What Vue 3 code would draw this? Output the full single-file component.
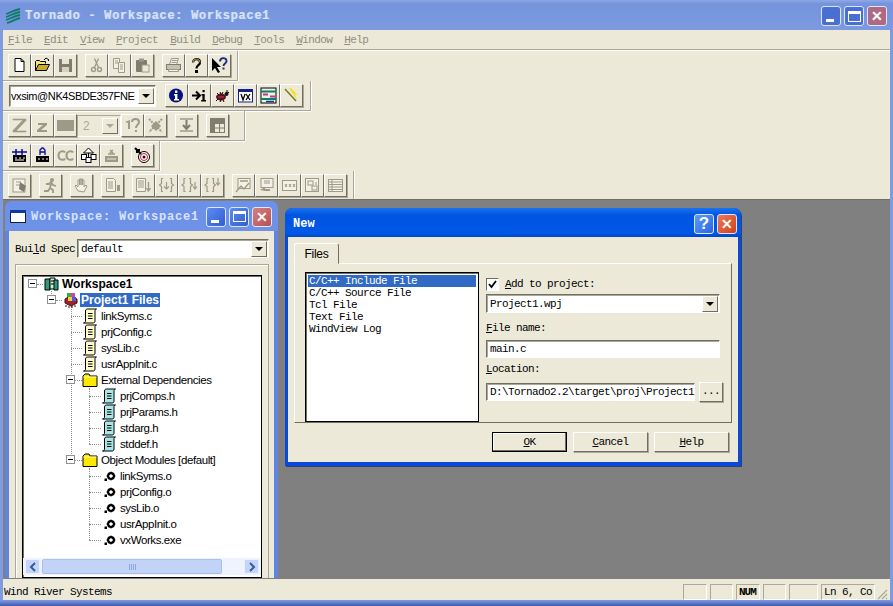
<script setup>
const menus = ['File', 'Edit', 'View', 'Project', 'Build', 'Debug', 'Tools', 'Window', 'Help']

const g = '#9d9a8a'
const d = '#7f7d70'
const icons = {
  new: '<path d="M4 1.5h6l3 3v10H4z" fill="#fff" stroke="#000"/><path d="M10 1.5v3h3" fill="none" stroke="#000"/>',
  open: '<path d="M1.5 13.5v-9l1-1h3l1 1h5v2" fill="#f5e27a" stroke="#000"/><path d="M1.5 13.5l3-6h11l-3 6z" fill="#c9a92e" stroke="#000"/><path d="M10 3l2-2 3 2-1 1" fill="none" stroke="#000"/>',
  save: `<rect x="2" y="2" width="13" height="13" fill="${d}"/><rect x="5" y="2" width="7" height="5" fill="#e8e5d4"/><rect x="5" y="10" width="7" height="5" fill="#d6d3c2"/>`,
  cut: `<circle cx="5.5" cy="12.5" r="2" fill="none" stroke="${g}" stroke-width="1.4"/><circle cx="11.5" cy="12.5" r="2" fill="none" stroke="${g}" stroke-width="1.4"/><path d="M6.5 10.5L10.5 1.5M10.5 10.5L6.5 1.5" stroke="${g}" stroke-width="1.3"/>`,
  copy: `<path d="M2.5 1.5h6v10h-6z" fill="#f3f1e6" stroke="${g}"/><path d="M7.5 5.5h6v10h-6z" fill="#f3f1e6" stroke="${g}"/><path d="M4 4h3M4 6h3M9 8h3M9 10h3M9 12h3" stroke="${g}"/>`,
  paste: `<rect x="2" y="3" width="11" height="12" rx="1" fill="${d}"/><rect x="5" y="1.5" width="5" height="3" fill="${g}"/><rect x="8" y="8" width="7" height="7" fill="#ece9d8" stroke="${g}"/>`,
  print: `<path d="M4.500 7.500l2-6h7l-2 6z" fill="#f3f1e6" stroke="${g}"/><rect x="1.500" y="7.500" width="14" height="5" fill="#c5c2b2" stroke="${d}"/><path d="M3.500 12.500h10v2h-10z" fill="#f3f1e6" stroke="${g}"/><path d="M7 3.500h5M6.500 5.500h5" stroke="${g}"/>`,
  help: '<path d="M5 5.500C5 1 12 1 12 5.500c0 3-3.500 2.500-3.500 6" fill="none" stroke="#000" stroke-width="2.200"/><path d="M5 5.500C5 1 12 1 12 5.500" fill="none" stroke="#f2e05c" stroke-width=".8"/><rect x="7" y="13" width="3" height="3" fill="#000"/>',
  ctx: '<path d="M1 1v13l3-3 3 5 2-1-3-5h4z" fill="#000"/><path d="M9 4.500C9 0 15.500 0 15.500 4.200c0 2.400-3 2.300-3 4.800" fill="none" stroke="#1b2f78" stroke-width="1.900"/><rect x="11.500" y="10.500" width="2" height="2" fill="#1b2f78"/>',
  info: '<circle cx="8" cy="8.500" r="7" fill="#04127e"/><rect x="7" y="3.500" width="2.400" height="2.400" fill="#fff"/><path d="M6 7h3.400v5H11v1.500H6V12h1V8.500H6z" fill="#fff"/>',
  goi: '<path d="M1 8.500h7M5 4.500l4 4-4 4" fill="none" stroke="#000" stroke-width="2"/><rect x="11.500" y="3" width="2.200" height="2.200" fill="#000"/><path d="M10.500 7h3.200v6H15v1.500h-4.800V13h1.200V8.500h-.9z" fill="#000"/>',
  bug: '<ellipse cx="7" cy="10" rx="5" ry="3.500" fill="#5b1020"/><circle cx="12.500" cy="7" r="2" fill="#111"/><path d="M3 6l2 2M6 5l1 2M9 5l-1 2M2 14l2-2M6 15l1-2M10 15l-1-2M13 3l0 3M15 5l-2 2" stroke="#000"/><path d="M4 10h6" stroke="#c04060"/>',
  vx: '<rect x="1.500" y="2.500" width="14" height="12.500" fill="#fff" stroke="#10208a"/><rect x="1" y="2" width="15" height="3" fill="#10208a"/><path d="M4 7l2 6 2-6M9 7l4 6M13 7l-4 6" fill="none" stroke="#000" stroke-width="1.300"/>',
  chart: '<rect x="1" y="1" width="15" height="15" fill="#e8f4e0" stroke="#000"/><path d="M1 4.500h15M1 12h15" stroke="#0a7f6a" stroke-width="2"/><path d="M3 7.500h5M10 9.500h5" stroke="#d03090" stroke-width="2"/><path d="M6 14.500h8" stroke="#2030a0" stroke-width="1.500"/>',
  wand: '<path d="M2 2l11 12" stroke="#7a7a20" stroke-width="1.500"/><path d="M6 1l8 12-2-6 3 1L8 1z" fill="#f5e21e"/>',
  bigz: `<path d="M2 2h13v1.500L5 14h10v1H2v-1.500L12 3H2z" fill="${g}" stroke="${g}" stroke-width=".6"/>`,
  smz: `<path d="M4 6h9v2l-6 5h6v2H3v-2l6-5H4z" fill="${g}"/>`,
  block: '<rect x="-1" y="3" width="19" height="11" fill="#9d9a8a"/>',
  qmark: `<path d="M1 5l5-2v9H4V6z" fill="${g}"/><path d="M8 5c0-4 7-4 7 0 0 3-3 2.500-3 6" fill="none" stroke="${g}" stroke-width="2"/><rect x="11" y="13" width="2" height="2" fill="${g}"/>`,
  cross: `<path d="M2 2l13 13M15 2L2 15" stroke="${g}" stroke-width="2" stroke-dasharray="2 1"/><path d="M4 9l5-5 5 5-5 5z" fill="${g}"/>`,
  down: `<path d="M2 2h13M2 14h13" stroke="${g}" stroke-width="1.600"/><path d="M8.500 3v8M5 8l3.500 4L12 8" fill="none" stroke="${d}" stroke-width="2"/>`,
  grid: `<rect x="1" y="1" width="15" height="15" fill="${d}"/><path d="M6 7h9v8H6z" fill="#ece9d8"/><path d="M6 11h9M10.500 7v8" stroke="${d}"/>`,
  b1: '<rect x="2" y="8" width="13" height="7" fill="#000"/><path d="M4 11h2M8 11h2M12 11h2M4 13h9" stroke="#fff"/><path d="M1 5h15M5 2v7M11 2v7" stroke="#0a0aa0" stroke-width="1.500"/>',
  b2: '<rect x="2" y="9" width="13" height="6" fill="#000"/><path d="M4 12h2M8 12h2M12 12h2" stroke="#fff"/><path d="M6 8V3l2-2h1l2 2v5M6 5h5" fill="none" stroke="#0a0aa0" stroke-width="1.300"/>',
  cc: `<path d="M8 5.500C7 3.500 1.500 3.500 1.500 8.500S7 13.500 8 11.500M16 5.500C15 3.500 9.500 3.500 9.500 8.500S15 13.500 16 11.500" fill="none" stroke="${g}" stroke-width="2"/>`,
  house: '<path d="M8.500 1l5 5h-10z" fill="#fff" stroke="#000"/><rect x="1.500" y="7.500" width="5" height="5" fill="#fff" stroke="#000"/><rect x="11" y="7.500" width="5" height="5" fill="#fff" stroke="#000"/><rect x="6" y="10.500" width="5" height="5" fill="#fff" stroke="#000"/><path d="M8.500 6v4" stroke="#000"/>',
  gbuild: `<rect x="2" y="9" width="13" height="6" fill="${g}"/><path d="M5 7h7M7 3l3 3M10 3L7 6" stroke="${g}" stroke-width="1.500"/><path d="M4 12h9" stroke="#ece9d8"/>`,
  target: '<circle cx="10" cy="10" r="5.500" fill="#fff" stroke="#000"/><circle cx="10" cy="10" r="3.500" fill="none" stroke="#c02040"/><circle cx="10" cy="10" r="1.500" fill="#400"/><path d="M1 1l6 6M3 6V3h3" fill="none" stroke="#000" stroke-width="2"/>',
  g1: `<rect x="2" y="2" width="12" height="13" fill="#f3f1e6" stroke="${g}"/><path d="M5 5h5M5 8h4" stroke="${g}"/><path d="M9 5l6 4-2 6-5-3z" fill="${d}"/>`,
  run: `<circle cx="10" cy="3" r="2" fill="${g}"/><path d="M4 7h3l2-2 2 3 3 1M9 7l-1 4 3 2v3M8 11l-2 3H2" fill="none" stroke="${g}" stroke-width="1.800"/>`,
  hand: `<path d="M5 14L2 9l1-1 2 2V3h1.500v5V2H8v6V2h1.500v6V3H11v7l2-2 1 1-3 6z" fill="#f3f1e6" stroke="${g}"/>`,
  list: `<path d="M2.500 1.500h7l2 2v11h-9z" fill="#f3f1e6" stroke="${g}"/><path d="M4 5h5M4 7h5M4 9h5M4 11h5" stroke="${g}"/><rect x="13" y="8" width="3" height="6" fill="${g}"/>`,
  listd: `<path d="M1.500 1.500h9v13h-9z" fill="#f3f1e6" stroke="${g}"/><path d="M3 4h6M3 6h6M3 8h6M3 10h6" stroke="${g}"/><path d="M13.500 5v9M11.500 11l2 3 2-3" fill="none" stroke="${g}" stroke-width="1.300"/>`,
  br1: `<path d="M5 1.500H3.500v5L1.500 8l2 1.500v5H5M12 1.500h1.500v5l2 1.500-2 1.500v5H12" fill="none" stroke="${g}" stroke-width="1.200"/><path d="M8.500 5v7M6 9.500l2.500 2.500L11 9.500" fill="none" stroke="${g}" stroke-width="1.200"/>`,
  br2: `<path d="M4.500 1.500H3v5L1 8l2 1.500v5h1.500M8 1.500h1.500v5l2 1.500-2 1.500v5H8" fill="none" stroke="${g}" stroke-width="1.200"/><path d="M14 5v7M12 9.500l2 2.500 2-2.500" fill="none" stroke="${g}" stroke-width="1.200"/>`,
  br3: `<path d="M4.500 1.500H3v5L1 8l2 1.500v5h1.500M8 1.500h1.500v5l2 1.500-2 1.500v5H8" fill="none" stroke="${g}" stroke-width="1.200"/><path d="M14 1v7M12 5.500L14 8l2-2.500" fill="none" stroke="${g}" stroke-width="1.200"/>`,
  w1: `<rect x="3" y="1.500" width="12" height="10" fill="#f3f1e6" stroke="${g}"/><path d="M5 4h8M1 15l5-6 3 3 5-6" fill="none" stroke="${g}" stroke-width="1.300"/>`,
  w2: `<rect x="3" y="1.500" width="12" height="9" fill="#f3f1e6" stroke="${g}"/><path d="M6 4h6M6 6h6" stroke="${g}"/><path d="M2 13l5-3v2h5v2H7" fill="${g}"/>`,
  w3: `<rect x="1.500" y="3.500" width="14" height="10" fill="#f3f1e6" stroke="${g}"/><path d="M4 7l2 3M6 7l-2 3M8 7l2 3M10 7l-2 3M12 7l2 3M14 7l-2 3" stroke="${g}"/>`,
  w4: `<rect x="1.500" y="1.500" width="13" height="13" fill="#f3f1e6" stroke="${g}"/><rect x="4" y="4" width="5" height="4" fill="none" stroke="${g}"/><rect x="8" y="9" width="5" height="4" fill="none" stroke="${g}"/><path d="M12 5v3" stroke="${g}"/>`,
  w5: `<rect x="1.500" y="2.500" width="14" height="12" fill="#f3f1e6" stroke="${g}"/><path d="M2 5h13M2 7.500h13M2 10h13M2 12.500h13M5 3v11" stroke="${g}"/>`
}

const bars = [
  { cls: 'bar1', groups: [['new', 'open', 'save'], ['cut', 'copy', 'paste'], ['print', 'help', 'ctx']] },
  { cls: 'bar2', combo: 'vxsim@NK4SBDE357FNE', groups: [['info', 'goi', 'bug', 'vx', 'chart', 'wand']] },
  { cls: 'bar3', groups: [['bigz', 'smz', 'block', '#2', 'qmark', 'cross'], ['down'], ['grid']] },
  { cls: 'bar4', groups: [['b1', 'b2', 'cc', 'house', 'gbuild'], ['target']] },
  { cls: 'bar5', groups: [['g1'], ['run'], ['hand'], ['list'], ['listd', 'br1', 'br2', 'br3'], ['w1', 'w2', 'w3', 'w4', 'w5']] }
]

const tree = [
  { label: 'Workspace1', level: 0, icon: 'ws', box: true, bold: true },
  { label: 'Project1 Files', level: 1, icon: 'proj', box: true, bold: true, sel: true },
  { label: 'linkSyms.c', level: 2, icon: 'c' },
  { label: 'prjConfig.c', level: 2, icon: 'c' },
  { label: 'sysLib.c', level: 2, icon: 'c' },
  { label: 'usrAppInit.c', level: 2, icon: 'c' },
  { label: 'External Dependencies', level: 2, icon: 'folder', box: true },
  { label: 'prjComps.h', level: 3, icon: 'h' },
  { label: 'prjParams.h', level: 3, icon: 'h' },
  { label: 'stdarg.h', level: 3, icon: 'h' },
  { label: 'stddef.h', level: 3, icon: 'h' },
  { label: 'Object Modules [default]', level: 2, icon: 'folder', box: true },
  { label: 'linkSyms.o', level: 3, icon: 'o' },
  { label: 'prjConfig.o', level: 3, icon: 'o' },
  { label: 'sysLib.o', level: 3, icon: 'o' },
  { label: 'usrAppInit.o', level: 3, icon: 'o' },
  { label: 'vxWorks.exe', level: 3, icon: 'o' }
]
const docPath = 'M3.500 3c0-1.500 1-2 2-2h9c-1 0-1.500 1-1.500 2v10c0 1.500-1 2-2 2H1.500c1.500 0 2-1 2-2z'
const treeIcons = {
  ws: '<path d="M1 3h5v11H1z" fill="#2f9a78" stroke="#000"/><path d="M6 2h5v11H6z" fill="#bff0d8" stroke="#000"/><path d="M10 4h4v10h-4z" fill="#2f9a78" stroke="#000"/><path d="M7 5h3M7 8h3" stroke="#000"/>',
  proj: '<path d="M2 7l5-3 7 3v4l-6 3-6-3z" fill="#a02030" stroke="#401010"/><rect x="4" y="1" width="4" height="4" fill="#30b040"/><rect x="8" y="1" width="4" height="4" fill="#d040c0"/><rect x="5" y="5" width="4" height="4" fill="#f0d030"/><rect x="9" y="5" width="4" height="4" fill="#4060e0"/><path d="M3 13v2M6 14v2M9 14v2M12 13v2" stroke="#401010"/>',
  c: `<path d="${docPath}" fill="#fffbc4" stroke="#000"/><path d="M6 5.500h4.500M6 8h4.500M6 10.500h4.500" stroke="#000" stroke-width="1.200"/>`,
  h: `<path d="${docPath}" fill="#a5e8e8" stroke="#000"/><path d="M6 5.500h4.500M6 8h4.500M6 10.500h4.500" stroke="#000" stroke-width="1.200"/>`,
  folder: '<path d="M1 14.500V4l2-2h4l1 2h7v10.500z" fill="#ffe800" stroke="#000" stroke-width="1"/><path d="M1.500 5h13" stroke="#fff8a0"/>',
  o: '<circle cx="10" cy="8" r="3" fill="none" stroke="#000" stroke-width="2"/><path d="M10 3.500v9M5.500 8h9M7 5l6 6M13 5l-6 6" stroke="#000" stroke-width="1"/><circle cx="10" cy="8" r="1.600" fill="#fff"/><rect x="3.500" y="10.500" width="2.500" height="2.500" fill="#000"/>'
}
</script>

<template>
  <div class="app">
    <header class="titlebar">
      <svg class="logo" viewBox="0 0 16 16" width="16" height="16">
        <path d="M1 6c4-1 8-4 14-5M1 9c4-1 8-4 14-5M1 12c4-1 8-4 14-5M2 15c4-1 8-4 13-5" fill="none" stroke="#0e7a6c" stroke-width="1.800" />
      </svg>
      <span class="title-text">Tornado - Workspace: Workspace1</span>
      <div class="win-btns">
        <span class="wb wb-blue"><i class="min"></i></span>
        <span class="wb wb-blue"><i class="max"></i></span>
        <span class="wb wb-mute">✕</span>
      </div>
    </header>

    <div class="body">
      <nav class="menubar">
        <span v-for="m in menus" :key="m" class="menu"><u>{{ m[0] }}</u>{{ m.slice(1) }}</span>
      </nav>

      <div v-for="bar in bars" :key="bar.cls" class="toolbar" :class="bar.cls">
        <div v-if="bar.combo" class="combo tb-combo">
          <span class="combo-value">{{ bar.combo }}</span>
          <span class="arrow"><b></b></span>
        </div>
        <div v-for="(grp, i) in bar.groups" :key="i" class="tb-group">
          <template v-for="ic in grp" :key="ic">
            <div v-if="ic === '#2'" class="mini-combo">
              <span>2</span>
              <span class="arrow off"><b></b></span>
            </div>
            <span v-else class="tbtn">
              <svg viewBox="0 0 17 17" width="17" height="17" v-html="icons[ic]"></svg>
            </span>
          </template>
        </div>
      </div>

      <main class="client">
        <section class="ws">
          <div class="ws-title">
            <svg width="16" height="13" viewBox="0 0 16 13"><rect x=".5" y=".5" width="15" height="12" fill="#fff" stroke="#123" /><rect x="0" y="0" width="16" height="3" fill="#123a9a" /></svg>
            <span class="ws-title-text">Workspace: Workspace1</span>
            <div class="win-btns small">
              <span class="wb wb-bright"><i class="min"></i></span>
              <span class="wb wb-bright"><i class="max"></i></span>
              <span class="wb wb-red">✕</span>
            </div>
          </div>
          <div class="ws-body">
            <div class="spec">
              <span class="mono spec-label">Bui<u>l</u>d Spec</span>
              <div class="combo spec-combo">
                <span class="combo-value mono">default</span>
                <span class="arrow"><b></b></span>
              </div>
            </div>
            <div class="group">
              <div class="treebox">
                <div class="tree">
                  <div class="vline l1"></div>
                  <div class="vline l2"></div>
                  <div class="vline l3"></div>
                  <div class="vline l4"></div>
                  <div v-for="n in tree" :key="n.label" class="node" :class="'lv' + n.level">
                    <span class="conn"></span>
                    <span v-if="n.box" class="expander"></span>
                    <svg class="ticon" viewBox="0 0 16 16" width="16" height="16" v-html="treeIcons[n.icon]"></svg>
                    <span class="nlabel" :class="{ bold: n.bold, sel: n.sel }">{{ n.label }}</span>
                  </div>
                </div>
                <div class="hscroll">
                  <span class="sb-btn">
                    <svg width="8" height="10" viewBox="0 0 8 10"><path d="M6 1L2 5l4 4" fill="none" stroke="#3a5a9a" stroke-width="2" /></svg>
                  </span>
                  <span class="sb-thumb"><i></i></span>
                  <span class="sb-btn">
                    <svg width="8" height="10" viewBox="0 0 8 10"><path d="M2 1l4 4-4 4" fill="none" stroke="#3a5a9a" stroke-width="2" /></svg>
                  </span>
                </div>
              </div>
            </div>
          </div>
        </section>

        <section class="dialog">
          <div class="dlg-title">
            <span class="dlg-title-text">New</span>
            <div class="win-btns dlg">
              <span class="wb wb-help">?</span>
              <span class="wb wb-close">✕</span>
            </div>
          </div>
          <div class="dlg-body">
            <div class="tabs"><span class="tab">Files</span></div>
            <div class="panel">
              <ul class="filelist mono">
                <li class="picked">C/C++ Include File</li>
                <li>C/C++ Source File</li>
                <li>Tcl File</li>
                <li>Text File</li>
                <li>WindView Log</li>
              </ul>
              <div class="form mono">
                <label class="check">
                  <span class="checkbox">
                    <svg width="9" height="9" viewBox="0 0 9 9"><path d="M1 4l2.500 3L8 1" fill="none" stroke="#000" stroke-width="1.800" /></svg>
                  </span>
                  <span><u>A</u>dd to project:</span>
                </label>
                <div class="combo dlg-combo">
                  <span class="combo-value">Project1.wpj</span>
                  <span class="arrow"><b></b></span>
                </div>
                <div class="flabel"><u>F</u>ile name:</div>
                <div class="input">main.c</div>
                <div class="flabel second"><u>L</u>ocation:</div>
                <div class="loc">
                  <div class="input grow">D:\Tornado2.2\target\proj\Project1</div>
                  <span class="btn dots">...</span>
                </div>
              </div>
            </div>
            <div class="actions mono">
              <span class="btn push default"><u>O</u>K</span>
              <span class="btn push"><u>C</u>ancel</span>
              <span class="btn push"><u>H</u>elp</span>
            </div>
          </div>
        </section>
      </main>

      <footer class="status mono">
        <span class="status-msg">Wind River Systems</span>
        <span class="cell w25"></span>
        <span class="cell w23"></span>
        <span class="cell w25 on">NUM</span>
        <span class="cell w23"></span>
        <span class="cell w30"></span>
        <span class="cell w54">Ln 6, Co</span>
        <svg class="grip" width="13" height="13" viewBox="0 0 13 13"><path d="M12 3l-9 9M12 7l-5 5M12 11l-1 1" stroke="#aca899" stroke-width="1.200" /></svg>
      </footer>
    </div>
  </div>
</template>

<style>
html, body { margin: 0; padding: 0; overflow: hidden; }
</style>

<style scoped>
.app {
  width: 893px; height: 606px; overflow: hidden; display: flex; flex-direction: column;
  background: linear-gradient(#7e9be0 0, #7e9be0 600px, #6a86d4 602px, #3f58ac 606px);
  font-family: "Liberation Sans", Arial, sans-serif; color: #000;
}
.mono, .menu, .title-text, .ws-title-text, .dlg-title-text {
  font-family: "Liberation Mono", "DejaVu Sans Mono", monospace;
}
.mono, .menu { font-size: 11px; letter-spacing: -0.6px; }

.titlebar {
  height: 30px; flex: none; display: flex; align-items: center; padding: 2px 6px 0 5px; box-sizing: border-box;
  background: linear-gradient(#8ea8e8 0, #7694dc 12%, #7a98df 70%, #7d9ae0 100%);
}
.logo { margin-right: 4px; }
.title-text { color: #d8e4fa; font-weight: 700; font-size: 12px; letter-spacing: .7px; white-space: pre; text-shadow: 1px 0 0 rgba(216, 228, 250, .35); }
.win-btns { margin-left: auto; display: flex; gap: 3px; }
.wb {
  width: 20px; height: 20px; box-sizing: border-box; border: 1px solid #dde6fa; border-radius: 3px;
  display: flex; align-items: center; justify-content: center; color: #fff; font-size: 14px; font-weight: 700; position: relative;
}
.wb-blue { background: #4a6fd4; }
.wb-mute { background: #ad6a82; }
.wb-bright { background: linear-gradient(135deg, #5e8cf0, #2f5fd0); }
.wb-red { background: linear-gradient(135deg, #d48080, #b85050); }
.wb-help { background: linear-gradient(135deg, #5c9cf8, #2a66e0); font-size: 17px; }
.wb-close { background: linear-gradient(135deg, #ec7a58, #d0401c); }
.min { position: absolute; left: 4px; bottom: 3px; width: 8px; height: 3px; background: #fff; }
.max { width: 11px; height: 7px; border: 1px solid #fff; border-top-width: 3px; box-sizing: content-box; }

.body { flex: 1; min-height: 0; margin: 0 3px 6px; background: #ece9d8; display: flex; flex-direction: column; }

.menubar { height: 20px; flex: none; display: flex; align-items: center; padding: 1px 0 0 5px; box-sizing: border-box; border-bottom: 1px solid #aca899; box-shadow: 0 1px 0 #fff; color: #8f8d80; }
.menu { padding-right: 12px; }

.toolbar { display: flex; align-items: center; box-sizing: border-box; padding-left: 5px; gap: 8px; border-right: 1px solid #aca899; border-bottom: 1px solid #aca899; box-shadow: 1px 0 0 #fff, 0 1px 0 #fff; }
.bar1 { width: 235px; height: 30px; margin-top: 1px; }
.bar2 { width: 308px; height: 30px; }
.bar3 { width: 242px; height: 30px; }
.bar4 { width: 157px; height: 30px; }
.bar5 { width: 351px; height: 28px; border-bottom: 0; box-shadow: 1px 0 0 #fff; padding-top: 1px; }
.tb-group { display: flex; align-items: center; }
.tbtn {
  width: 23px; height: 23px; box-sizing: border-box; display: flex; align-items: center; justify-content: center;
  background: #ece9d8; border: 1px solid; border-color: #fff #716f64 #716f64 #fff; box-shadow: 1px 1px 0 #aca899;
}
.mini-combo { width: 44px; height: 22px; box-sizing: border-box; background: #ece9d8; display: flex; align-items: center; justify-content: space-between; padding: 0 2px 0 5px; border: 1px solid; border-color: #aca899 #fff #fff #aca899; color: #aca899; font-size: 12px; }

.combo { background: #fff; box-sizing: border-box; display: flex; align-items: center; justify-content: space-between; border: 1px solid; border-color: #716f64 #fff #fff #716f64; box-shadow: inset 1px 1px 0 #aca899; padding: 0 1px 0 3px; }
.combo-value { white-space: pre; }
.tb-combo { width: 147px; height: 22px; margin-left: 1px; margin-right: 1px; font-size: 11px; letter-spacing: -0.4px; padding-left: 1px; flex: none; }
.arrow { width: 16px; height: 16px; background: #ece9d8; border: 1px solid; border-color: #fff #716f64 #716f64 #fff; box-sizing: border-box; display: flex; align-items: center; justify-content: center; flex: none; }
.arrow b { width: 0; height: 0; border: 4px solid transparent; border-top-color: #000; border-bottom: 0; }
.arrow.off b { border-top-color: #aca899; }

.client { flex: 1; min-height: 0; background: #808080; position: relative; border-top: 1px solid #716f64; }

.ws { position: absolute; left: 2px; top: 1px; width: 273px; bottom: 1px; background: #5f83e0; border-radius: 7px 7px 0 0; display: flex; flex-direction: column; box-sizing: border-box; padding: 0 4px; }
.ws-title { height: 30px; flex: none; display: flex; align-items: center; gap: 5px; background: linear-gradient(#6a90ea, #6f92e6); margin: 0 -4px; padding: 1px 6px 0 5px; box-sizing: border-box; border-radius: 7px 7px 0 0; }
.ws-title-text { color: #d6e2fa; font-weight: 700; font-size: 12px; letter-spacing: .8px; white-space: pre; }
.win-btns.small { margin-left: auto; }
.ws-body { flex: 1; min-height: 0; background: #ece9d8; display: flex; flex-direction: column; padding: 8px 5px 0 6px; }
.spec { display: flex; align-items: center; height: 19px; flex: none; }
.spec-label { width: 62px; flex: none; white-space: pre; }
.spec-combo { flex: 1; height: 19px; }
.group { flex: 1; min-height: 0; margin-top: 6px; padding: 10px 6px 0 6px; border: 1px solid #aca899; border-bottom: 0; box-shadow: inset 1px 1px 0 #fff; display: flex; }
.treebox { flex: 1; min-width: 0; background: #fff; border: 1px solid #000; box-shadow: inset 1px 1px 0 #716f64; display: flex; flex-direction: column; box-sizing: border-box; }
.tree { flex: 1; min-height: 0; position: relative; }
.node { height: 16px; display: flex; align-items: center; position: relative; font-size: 11.500px; letter-spacing: -0.4px; white-space: pre; }
.lv0 { padding-left: 29px; }
.lv1 { padding-left: 53px; }
.lv2 { padding-left: 59px; }
.lv3 { padding-left: 78px; }
.ticon { flex: none; margin-right: 3px; }
.expander { position: absolute; width: 9px; height: 9px; box-sizing: border-box; border: 1px solid #8e8f8f; background: linear-gradient(#000, #000) center / 5px 1px no-repeat #fff; top: 3px; }
.lv0 .expander { left: 5px; }
.lv1 .expander { left: 24px; }
.lv2 .expander { left: 43px; }
.lv0 .ticon { margin-left: -8px; margin-right: 2px; }
.lv1 .ticon { margin-left: -13px; margin-right: 1px; }
.conn { position: absolute; top: 8px; height: 0; border-top: 1px dotted #8e8f8f; }
.lv0 .conn { left: 14px; width: 6px; }
.lv1 .conn { left: 33px; width: 6px; }
.lv2 .conn { left: 48px; width: 11px; }
.lv3 .conn { left: 66px; width: 12px; }
.vline { position: absolute; width: 0; border-left: 1px dotted #8e8f8f; }
.l1 { left: 28px; top: 15px; height: 5px; }
.l2 { left: 48px; top: 30px; height: 154px; }
.l3 { left: 66px; top: 112px; height: 56px; }
.l4 { left: 66px; top: 192px; height: 72px; }
.bold { font-weight: 700; font-size: 12px; letter-spacing: 0; }
.sel { background: #316ac5; color: #fff; padding: 0 1px; }

.hscroll { height: 17px; flex: none; display: flex; align-items: center; gap: 2px; padding: 0 2px; margin-bottom: 2px; background: #eef3fd; }
.sb-btn { width: 15px; height: 15px; flex: none; background: #c3d5fb; border: 1px solid #eaf0fd; border-radius: 2px; display: flex; align-items: center; justify-content: center; box-sizing: border-box; }
.sb-thumb { width: 180px; height: 15px; background: #c3d3f8; border: 1px solid #a9c0ee; border-radius: 2px; box-sizing: border-box; margin-right: auto; display: flex; align-items: center; justify-content: center; }
.sb-thumb i { width: 7px; height: 6px; background: repeating-linear-gradient(90deg, #8fa8dc 0 1px, transparent 1px 2px); }

.dialog { position: absolute; left: 282px; top: 8px; width: 456px; height: 258px; background: #0a4ad8; border-radius: 7px 7px 0 0; display: flex; flex-direction: column; box-sizing: border-box; padding: 0 3px 4px; box-shadow: 1px 1px 0 #303f78; }
.dlg-title { height: 29px; flex: none; display: flex; align-items: center; margin: 0 -3px; padding: 2px 4px 0 8px; box-sizing: border-box; background: linear-gradient(#1a72f0, #0055e0 25%, #0058e8 85%, #0048c8); border-radius: 7px 7px 0 0; }
.dlg-title-text { color: #fff; font-weight: 700; font-size: 12px; padding-top: 1px; }
.win-btns.dlg { margin-left: auto; }
.dlg-body { flex: 1; min-height: 0; background: #ece9d8; display: flex; flex-direction: column; padding: 6px 6px 0 6px; }
.tabs { height: 20px; flex: none; display: flex; position: relative; z-index: 1; }
.tab { width: 45px; height: 21px; box-sizing: border-box; background: #ece9d8; border: 1px solid; border-color: #fff #716f64 #ece9d8 #fff; border-radius: 3px 3px 0 0; font-size: 12px; text-align: center; line-height: 20px; letter-spacing: -0.3px; }
.panel { height: 160px; flex: none; box-sizing: border-box; border: 1px solid; border-color: #fff #716f64 #716f64 #fff; display: flex; padding: 8px 0 0 10px; gap: 7px; }
.filelist { width: 174px; height: 150px; box-sizing: border-box; margin: 0; padding: 2px 2px; list-style: none; background: #fff; border: 1px solid #000; box-shadow: inset 1px 1px 0 #716f64; flex: none; }
.filelist li { height: 12px; line-height: 12px; padding-left: 1px; white-space: pre; }
.filelist .picked { background: #316ac5; color: #fff; }
.form { width: 237px; flex: none; padding-top: 5px; }
.check { display: flex; align-items: center; gap: 6px; height: 14px; }
.checkbox { width: 11px; height: 11px; background: #fff; border: 1px solid; border-color: #716f64 #fff #fff #716f64; display: flex; align-items: center; justify-content: center; }
.dlg-combo { width: 234px; height: 19px; margin-top: 3px; }
.flabel { height: 14px; line-height: 14px; margin: 8px 0 5px; }
.flabel.second { margin: 4px 0 6px; }
.input { width: 234px; height: 18px; box-sizing: border-box; background: #fff; border: 1px solid; border-color: #716f64 #fff #fff #716f64; box-shadow: inset 1px 1px 0 #aca899; padding-left: 3px; line-height: 16px; white-space: pre; }
.loc { display: flex; align-items: center; gap: 4px; }
.input.grow { width: 209px; }
.btn { background: #ece9d8; border: 1px solid; border-color: #fff #716f64 #716f64 #fff; box-shadow: 1px 1px 0 #aca899; box-sizing: border-box; display: flex; align-items: center; justify-content: center; }
.dots { width: 24px; height: 20px; padding-bottom: 2px; }
.actions { flex: 1; display: flex; justify-content: flex-end; align-items: flex-start; gap: 6px; padding: 9px 3px 0 0; }
.push { width: 75px; height: 20px; }
.default { border: 1px solid #000; box-shadow: inset -1px -1px 0 #716f64, inset 1px 1px 0 #fff; }

.status { height: 21px; flex: none; display: flex; align-items: flex-end; gap: 3px; box-sizing: border-box; padding-right: 2px; }
.status-msg { flex: 1; padding-left: 1px; white-space: pre; line-height: 15px; }
.cell { height: 16px; box-sizing: border-box; border: 1px solid; border-color: #aca899 #fff #fff #aca899; line-height: 14px; white-space: pre; padding-left: 2px; }
.w23 { width: 23px; }
.w25 { width: 24px; }
.w30 { width: 29px; }
.w54 { width: 54px; }
.on { font-weight: 700; letter-spacing: -1px; }
.grip { flex: none; margin-left: -3px; }
</style>
